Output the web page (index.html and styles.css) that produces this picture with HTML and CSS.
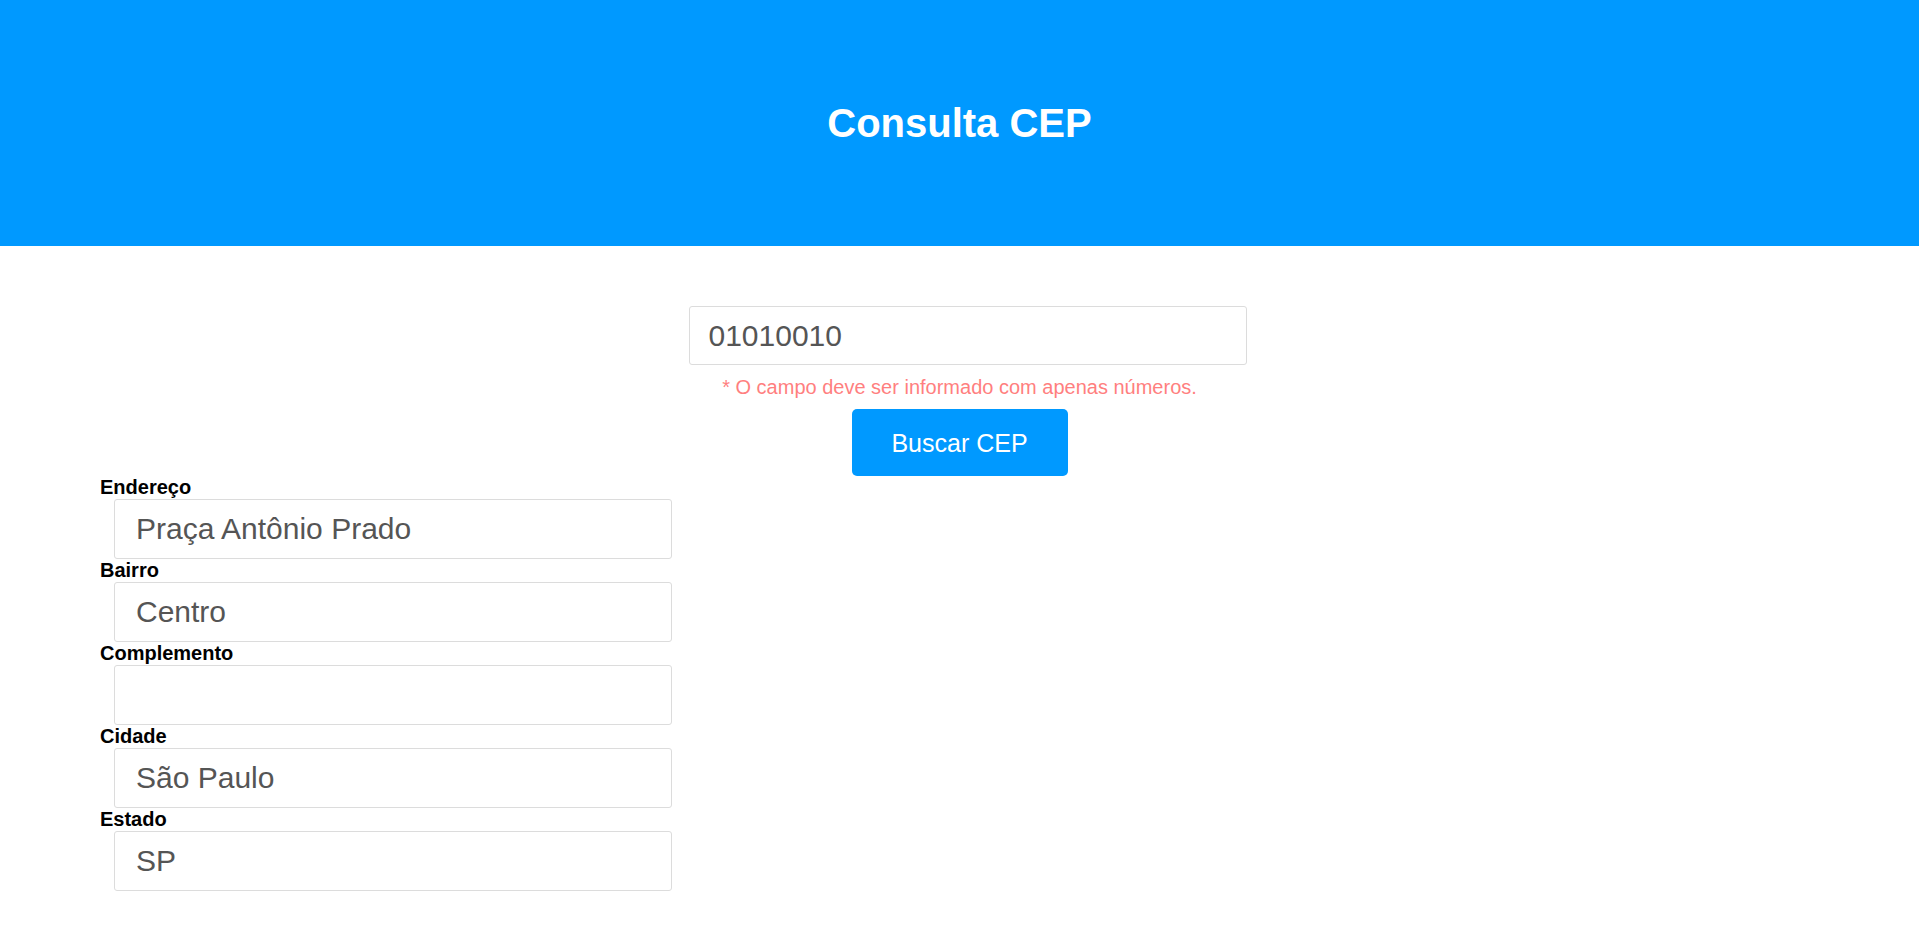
FILE: index.html
```html
<!DOCTYPE html>
<html lang="pt-BR">
<head>
<meta charset="utf-8">
<title>Consulta CEP</title>
<link rel="stylesheet" href="styles.css">
</head>
<body>
<header class="topo">
  <h1 class="titulo">Consulta CEP</h1>
</header>
<main class="conteudo">
  <section class="busca">
    <input class="campo campo-cep" type="text" value="01010010">
    <p class="aviso">* O campo deve ser informado com apenas números.</p>
    <button class="botao" type="button">Buscar CEP</button>
  </section>
  <section class="resultado">
    <label class="rotulo">Endereço</label>
    <input class="campo campo-res" type="text" value="Praça Antônio Prado">
    <label class="rotulo">Bairro</label>
    <input class="campo campo-res" type="text" value="Centro">
    <label class="rotulo">Complemento</label>
    <input class="campo campo-res" type="text" value="">
    <label class="rotulo">Cidade</label>
    <input class="campo campo-res" type="text" value="São Paulo">
    <label class="rotulo">Estado</label>
    <input class="campo campo-res" type="text" value="SP">
  </section>
</main>
</body>
</html>
```
FILE: styles.css
```css
html, body {
  margin: 0;
  padding: 0;
  background: #ffffff;
  font-family: "Liberation Sans", Arial, sans-serif;
}

.topo {
  height: 246px;
  background: #0099ff;
  display: flex;
  align-items: center;
  justify-content: center;
}

.titulo {
  margin: 0;
  color: #ffffff;
  font-size: 40px;
  font-weight: bold;
  line-height: 46px;
}

.conteudo {
  padding-top: 60px;
}

.busca {
  display: flex;
  flex-direction: column;
  align-items: center;
}

.campo {
  box-sizing: border-box;
  width: 558px;
  height: 59px;
  border: 1px solid #dcdcdc;
  border-radius: 3px;
  padding: 0 19px;
  font-family: "Liberation Sans", Arial, sans-serif;
  font-size: 30px;
  color: #555555;
  background: #ffffff;
  outline: none;
}

.campo-cep {
  margin-left: 16px;
}

.aviso {
  margin: 11px 0 10px;
  font-size: 20px;
  line-height: 23px;
  color: #ff7f7f;
}

.botao {
  width: 216px;
  height: 67px;
  border: none;
  border-radius: 5px;
  background: #0099ff;
  color: #ffffff;
  font-family: "Liberation Sans", Arial, sans-serif;
  font-size: 25px;
  padding-top: 2px;
  cursor: pointer;
}

.resultado {
  display: flex;
  flex-direction: column;
  align-items: flex-start;
  padding-left: 100px;
}

.rotulo {
  font-size: 20px;
  font-weight: bold;
  line-height: 23px;
  color: #000000;
}

.campo-res {
  margin-left: 14px;
  height: 60px;
  padding-left: 21px;
}
```
